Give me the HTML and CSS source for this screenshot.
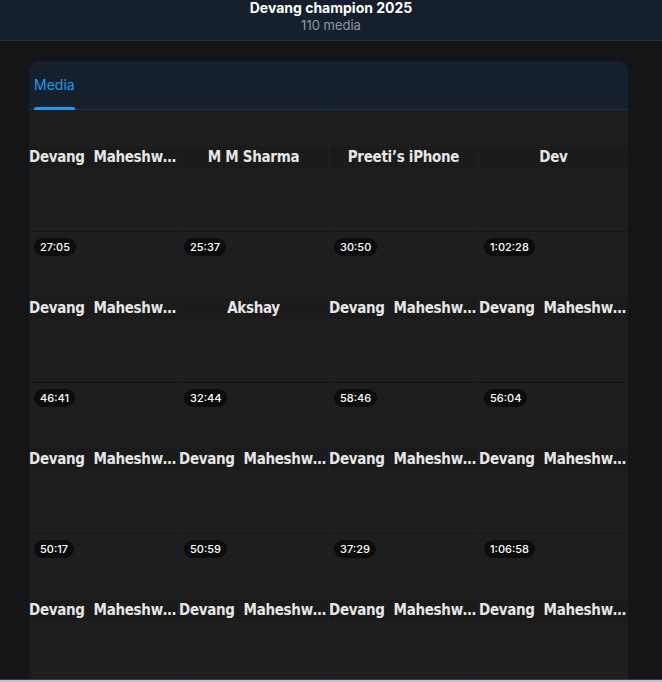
FILE: index.html
```html
<!DOCTYPE html>
<html lang="en">
<head>
    <meta charset="UTF-8">
    <meta name="viewport" content="width=device-width, initial-scale=1.0">
    <title>Devang champion 2025</title>
    <link rel="stylesheet" href="styles.css">
</head>
<body>

    <!-- Top bar -->
    <header class="top-bar">
        <h1 class="album-title">Devang champion 2025</h1>
        <div class="album-count">110 media</div>
    </header>

    <main class="page">
        <section class="media-card">
            <nav class="tabs">
                <a class="tab active" href="#">Media</a>
            </nav>

            <!-- Grid is scrolled a little, so the first row is partly hidden -->
            <div class="grid-viewport">
                <div class="media-grid">
                    <div class="tile"><div class="name-band"><span class="name">Devang  Maheshwari</span></div></div>
                    <div class="tile"><div class="name-band"><span class="name">M M Sharma</span></div></div>
                    <div class="tile"><div class="name-band"><span class="name">Preeti’s iPhone</span></div></div>
                    <div class="tile"><div class="name-band"><span class="name">Dev</span></div></div>

                    <div class="tile"><span class="duration">27:05</span><div class="name-band"><span class="name">Devang  Maheshwari</span></div></div>
                    <div class="tile"><span class="duration">25:37</span><div class="name-band"><span class="name">Akshay</span></div></div>
                    <div class="tile"><span class="duration">30:50</span><div class="name-band"><span class="name">Devang  Maheshwari</span></div></div>
                    <div class="tile"><span class="duration">1:02:28</span><div class="name-band"><span class="name">Devang  Maheshwari</span></div></div>

                    <div class="tile"><span class="duration">46:41</span><div class="name-band"><span class="name">Devang  Maheshwari</span></div></div>
                    <div class="tile"><span class="duration">32:44</span><div class="name-band"><span class="name">Devang  Maheshwari</span></div></div>
                    <div class="tile"><span class="duration">58:46</span><div class="name-band"><span class="name">Devang  Maheshwari</span></div></div>
                    <div class="tile"><span class="duration">56:04</span><div class="name-band"><span class="name">Devang  Maheshwari</span></div></div>

                    <div class="tile"><span class="duration">50:17</span><div class="name-band"><span class="name">Devang  Maheshwari</span></div></div>
                    <div class="tile"><span class="duration">50:59</span><div class="name-band"><span class="name">Devang  Maheshwari</span></div></div>
                    <div class="tile"><span class="duration">37:29</span><div class="name-band"><span class="name">Devang  Maheshwari</span></div></div>
                    <div class="tile"><span class="duration">1:06:58</span><div class="name-band"><span class="name">Devang  Maheshwari</span></div></div>
                </div>
            </div>
        </section>
    </main>

    <div class="window-edge"></div>

</body>
</html>
```

FILE: styles.css
```css
/* General page styles */
html, body {
    height: 100%;
}

body {
    margin: 0;
    background-color: #141516;
    font-family: 'Inter', 'Liberation Sans', sans-serif;
    color: #e7e9ea;
    display: flex;
    flex-direction: column;
    overflow: hidden;
}

/* Top bar */
.top-bar {
    height: 40px;
    background-color: #16202d;
    border-bottom: 1px solid #22303f;
    display: flex;
    flex-direction: column;
    align-items: center;
    flex-shrink: 0;
}

.album-title {
    margin: 0;
    font-size: 14px;
    font-weight: 700;
    line-height: 16px;
    color: #ffffff;
}

.album-count {
    font-size: 13px;
    line-height: 19px;
    color: #8b98a5;
}

/* Card */
.page {
    flex: 1;
    min-height: 0;
    padding: 20px 34px 0 29px;
    display: flex;
}

.media-card {
    flex: 1;
    display: flex;
    flex-direction: column;
    background-color: #16202d;
    border-radius: 10px 10px 0 0;
    overflow: hidden;
}

/* Tabs */
.tabs {
    height: 48px;
    border-bottom: 1px solid #1f3147;
    display: flex;
    padding-left: 5px;
    flex-shrink: 0;
}

.tab {
    position: relative;
    display: flex;
    align-items: center;
    font-size: 14px;
    color: #1d9bf0;
    text-decoration: none;
    padding-bottom: 1px;
}

.tab.active::after {
    content: '';
    position: absolute;
    left: 0;
    right: 0;
    bottom: -1px;
    height: 3px;
    border-radius: 2px 2px 0 0;
    background-color: #1d9bf0;
}

/* Media grid */
.grid-viewport {
    flex: 1;
    min-height: 0;
    overflow: hidden;
}

.media-grid {
    margin-top: -28px;
    display: grid;
    grid-template-columns: repeat(4, 1fr);
    gap: 1px;
    background-color: #17222f;
}

.tile {
    position: relative;
    height: 149px;
    border-bottom: 1px solid #151515;
    background-color: #1e1e1e;
    display: flex;
    align-items: center;
    overflow: hidden;
}

.name-band {
    width: 100%;
    height: 22px;
    background-color: #1b1b1b;
    display: flex;
    align-items: center;
    justify-content: center;
    overflow: hidden;
}

.name {
    display: block;
    max-width: 100%;
    font-family: 'DejaVu Sans Condensed', 'DejaVu Sans', sans-serif;
    font-stretch: condensed;
    font-weight: 700;
    font-size: 15px;
    letter-spacing: -0.3px;
    color: #e6e6e6;
    white-space: pre;
    overflow: hidden;
    text-overflow: ellipsis;
}

.duration {
    position: absolute;
    top: 5px;
    left: 5px;
    height: 18px;
    padding: 0 6px;
    border-radius: 9px;
    background-color: #0c0c0c;
    font-size: 11px;
    font-weight: 500;
    line-height: 18px;
    color: #ffffff;
}

.window-edge {
    height: 2px;
    flex-shrink: 0;
    border-top: 1px solid #3a3a40;
    background-color: #c4c2d2;
}
```
